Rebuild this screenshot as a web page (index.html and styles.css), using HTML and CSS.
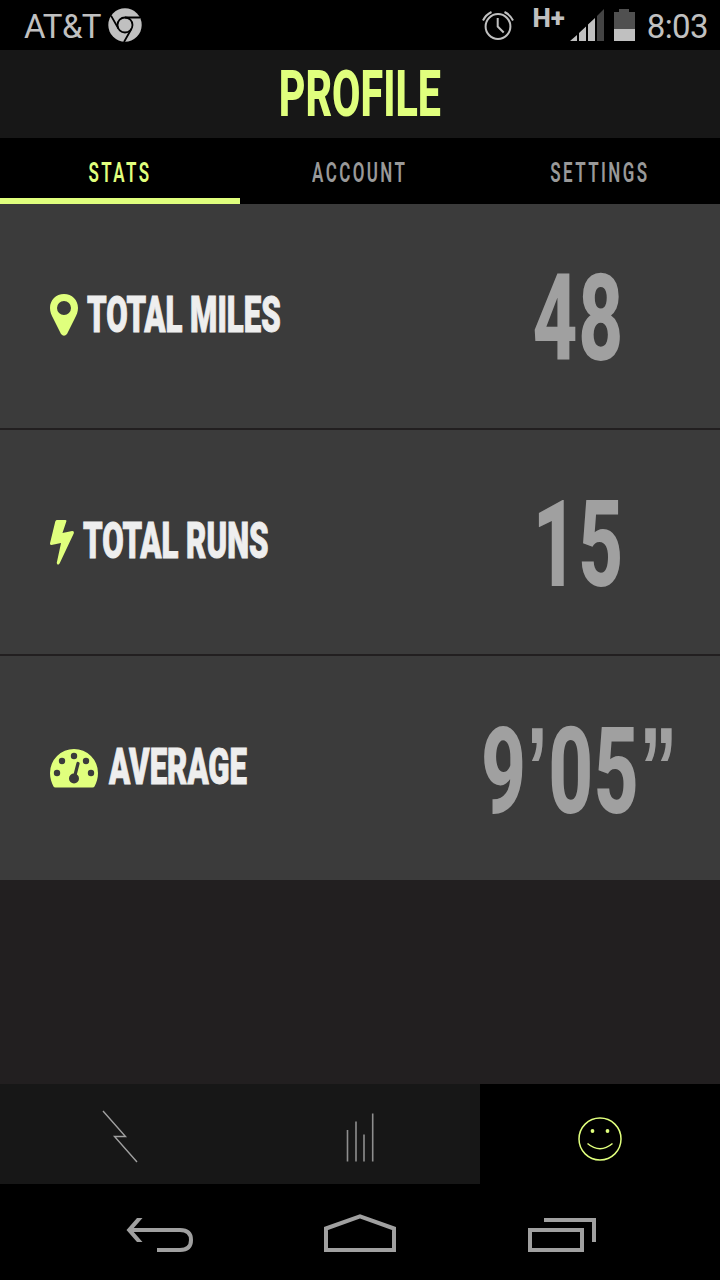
FILE: index.html
```html
<!DOCTYPE html>
<html lang="en">
<head>
    <meta charset="UTF-8">
    <meta name="viewport" content="width=device-width, initial-scale=1.0">
    <link rel="stylesheet" href="styles.css">
    <title>Profile</title>
</head>
<body>
    <div class="phone">
        <div class="statusbar">
            <div class="carrier">
                <span>AT&amp;T</span>
                <svg width="34" height="34" viewBox="0 0 34 34">
                    <circle cx="17" cy="17" r="16.7" fill="#c0c0c0"/>
                    <g fill="none" stroke="#000" stroke-width="1.8">
                        <circle cx="17" cy="17" r="7.5"/>
                        <path d="M17 9.5H32M10.5 20.7L3 7.6M23.5 20.7L16 34"/>
                    </g>
                </svg>
            </div>
            <div class="system">
                <svg class="alarm" width="34" height="34" viewBox="0 0 34 34" fill="none" stroke="#c0c0c0" stroke-width="2">
                    <circle cx="17" cy="18.5" r="12.4"/>
                    <path d="M16.7 10v8.5l6 6M2 12.500A18 18 0 0 1 10.500 4M23.500 4A18 18 0 0 1 32 12.500"/>
                </svg>
                <span class="network">H+</span>
                <svg class="signal" width="34" height="32" viewBox="0 0 34 32">
                    <path d="M27 7L34 0V32H27Z" fill="#444"/>
                    <path d="M0 32L7 26V32ZM9 24L16 17.500V32H9ZM18 15.500L25 9V32H18Z" fill="#c0c0c0"/>
                </svg>
                <svg class="battery" width="21" height="32" viewBox="0 0 21 32">
                    <path d="M0 3H5V0H15V3H21V20H0Z" fill="#505050"/>
                    <path d="M0 20H21V32H0Z" fill="#c0c0c0"/>
                </svg>
                <span class="clock">8:03</span>
            </div>
        </div>

        <header>
            <h1>PROFILE</h1>
        </header>

        <div class="tabs">
            <a class="tab active"><span>STATS</span></a>
            <a class="tab"><span>ACCOUNT</span></a>
            <a class="tab"><span>SETTINGS</span></a>
        </div>

        <main>
            <div class="stat">
                <div class="stat-name">
                    <svg class="pin" width="28" height="42" viewBox="0 0 28 42">
                        <path fill-rule="evenodd" d="M14 0C6 0 0 6 0 14C0 18 1.500 21 3 24L11 40Q14 43.500 17 40L25 24C26.500 21 28 18 28 14C28 6 22 0 14 0ZM14 7A7 7 0 1 1 14 21A7 7 0 1 1 14 7Z" fill="#e0ff7d"/>
                    </svg>
                    <span class="label">TOTAL MILES</span>
                </div>
                <div class="value"><span>48</span></div>
            </div>
            <div class="stat">
                <div class="stat-name">
                    <svg class="bolt" width="24" height="45" viewBox="0 0 25 45" preserveAspectRatio="none">
                        <path d="M7 0H16Q17.500 0 17 1.500L13 13L23 11Q25.500 11 24.700 13.500L10 43.500Q8 46 7 43L11.500 23L1.500 25Q-.5 25 .2 22.500L5.500 1.500Q6 0 7 0Z" fill="#e0ff7d"/>
                    </svg>
                    <span class="label">TOTAL RUNS</span>
                </div>
                <div class="value"><span>15</span></div>
            </div>
            <div class="stat">
                <div class="stat-name">
                    <svg class="gauge" width="48" height="39" viewBox="0 0 48 39">
                        <path d="M24 0A24 24 0 0 0 0 24C0 29 1.500 34 3.500 37.500Q4 38.500 5.500 38.500H42.500Q44 38.500 44.500 37.500C46.500 34 48 29 48 24A24 24 0 0 0 24 0Z" fill="#e0ff7d"/>
                        <g fill="#3b3b3b">
                            <circle cx="7" cy="24" r="3.200"/>
                            <circle cx="12" cy="12" r="3.200"/>
                            <circle cx="24" cy="7" r="3.200"/>
                            <circle cx="36" cy="12" r="3.200"/>
                            <circle cx="41" cy="24" r="3.200"/>
                            <circle cx="24" cy="29.500" r="5"/>
                        </g>
                        <path d="M24.500 28L28 14.500" stroke="#3b3b3b" stroke-width="3.200" stroke-linecap="round"/>
                    </svg>
                    <span class="label average">AVERAGE</span>
                </div>
                <div class="value pace"><span>9<i>’</i>05<i>”</i></span></div>
            </div>
        </main>

        <nav class="appnav">
            <a>
                <svg width="60" height="60" viewBox="0 0 60 60" fill="none" stroke="#a0a0a0" stroke-width="1.400">
                    <path d="M13 7L35.500 32.500H24.500L47 58"/>
                </svg>
            </a>
            <a>
                <svg width="60" height="60" viewBox="0 0 60 60" fill="none" stroke="#8e8e8e" stroke-width="1.600">
                    <path d="M17.500 26V57.500M26 17.500V57.500M34 30.500V57.500M42.700 9.500V57.500"/>
                </svg>
            </a>
            <a class="active">
                <svg width="60" height="60" viewBox="0 0 60 60" fill="none" stroke="#e0ff7d" stroke-width="1.500">
                    <circle cx="30" cy="35" r="21"/>
                    <path d="M17.500 39.500Q30 50 42.500 39.500"/>
                    <g fill="#e0ff7d" stroke="none">
                        <circle cx="22.500" cy="27" r="1.900"/>
                        <circle cx="37.500" cy="27" r="1.900"/>
                    </g>
                </svg>
            </a>
        </nav>

        <div class="sysnav">
            <svg width="68" height="40" viewBox="0 0 68 40">
                <path d="M3 16H54Q65 16 65 26Q65 36 54 36H31" fill="none" stroke="#a0a0a0" stroke-width="4"/>
                <path d="M.5 16L11 4H16.500L6 16L16.500 28H11Z" fill="#a0a0a0"/>
            </svg>
            <svg class="home" width="72" height="40" viewBox="0 0 72 40" fill="none" stroke="#a0a0a0" stroke-width="4">
                <path d="M2 14.500L36 2.300L70 14.500V36H2Z"/>
            </svg>
            <svg width="68" height="40" viewBox="0 0 68 40" fill="none" stroke="#a0a0a0" stroke-width="4">
                <path d="M2 16H54V36H2ZM16 6H66V28"/>
            </svg>
        </div>
    </div>
</body>
</html>
```
FILE: styles.css
```css
* {
    margin: 0;
    padding: 0;
    box-sizing: border-box;
}
body {
    background-color: #000;
    font-family: Roboto, sans-serif;
}
svg {
    display: block;
    flex: none;
}
.phone {
    width: 720px;
    height: 1280px;
    display: flex;
    flex-direction: column;
    background-color: #221f20;
    overflow: hidden;
}

/* status bar */
.statusbar {
    height: 50px;
    padding: 0 12px 0 24px;
    display: flex;
    justify-content: space-between;
    align-items: center;
    background-color: #000;
    color: #c0c0c0;
    font-size: 33px;
    letter-spacing: -.6px;
}
.carrier, .system {
    display: flex;
    align-items: center;
}
.carrier {
    gap: 7px;
}
.carrier span, .clock {
    padding-top: 2px;
}
.network {
    font-size: 26px;
    font-weight: 800;
    line-height: 20px;
    letter-spacing: 0;
    margin: -14px 5px 0 17px;
}
.battery {
    margin: 0 12px 0 10px;
}

/* title */
header {
    height: 88px;
    display: flex;
    justify-content: center;
    align-items: center;
    background-color: #171717;
}
h1 {
    font-size: 65px;
    font-weight: 800;
    line-height: 88px;
    color: #e0ff7d;
    transform: scaleX(.635);
}

/* tabs */
.tabs {
    height: 66px;
    display: grid;
    grid-template-columns: repeat(3, 1fr);
    background-color: #000;
}
.tab {
    height: 66px;
    display: flex;
    justify-content: center;
    align-items: flex-start;
    padding-top: 5px;
    border-bottom: 6px solid #000;
    color: #999;
    font-size: 28px;
    font-weight: 600;
    line-height: 60px;
    letter-spacing: 4px;
}
.tab span {
    transform: scaleX(.605);
}
.tab.active {
    color: #e0ff7d;
    border-color: #e0ff7d;
}

/* stats */
main {
    flex: 1;
}
.stat {
    height: 226px;
    display: grid;
    grid-template-columns: 436px 284px;
    background-color: #3b3b3b;
    border-bottom: 2px solid #221f20;
}
.stat-name {
    display: flex;
    align-items: center;
    padding: 0 0 2px 50px;
    gap: 9px;
}
.label {
    width: 193px;
    font-size: 50px;
    font-weight: 900;
    line-height: 60px;
    white-space: nowrap;
    color: #eee;
    -webkit-text-stroke: 1px #eee;
    transform-origin: left;
    transform: scaleX(.623);
}
.average {
    margin-left: 2px;
}
.bolt, .gauge {
    margin-top: 2px;
}
.value {
    display: flex;
    justify-content: center;
    align-items: center;
    padding-top: 6px;
    font-size: 120px;
    font-weight: 800;
    line-height: 140px;
    color: #a0a0a0;
}
.pace {
    padding: 8px 0 0 2px;
}
.value span {
    letter-spacing: 1px;
    transform: scaleX(.65);
}
.value i {
    font-family: "Liberation Sans", sans-serif;
    font-size: 116px;
    font-style: normal;
    font-weight: 700;
    line-height: 1;
    vertical-align: 4px;
}

/* bottom bars */
.appnav {
    height: 100px;
    display: grid;
    grid-template-columns: repeat(3, 1fr);
    background-color: #171717;
}
.appnav a {
    display: flex;
    justify-content: center;
    padding-top: 20px;
}
.appnav .active {
    background-color: #000;
}
.sysnav {
    height: 96px;
    padding: 30px 124px 0 126px;
    display: flex;
    justify-content: space-between;
    background-color: #000;
}
.home {
    margin-right: 2px;
}
```
